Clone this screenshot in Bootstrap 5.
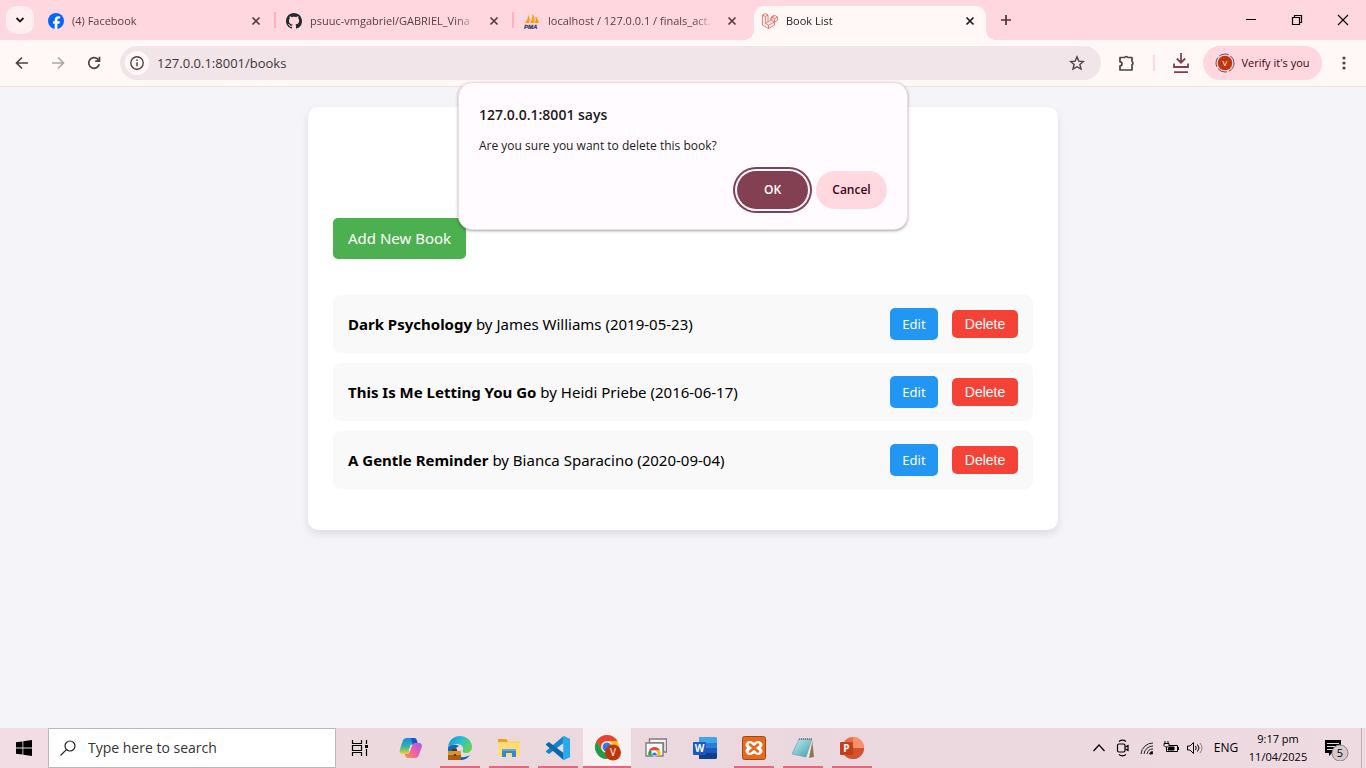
<!DOCTYPE html>
<html lang="en">
<head>
<meta charset="utf-8">
<meta name="viewport" content="width=device-width, initial-scale=1">
<title>Book List</title>
<link href="https://cdn.jsdelivr.net/npm/bootstrap@5.3.0/dist/css/bootstrap.min.css" rel="stylesheet">
<style>
  body { font-family: "Open Sans", "Noto Sans", sans-serif; font-size: 15px; line-height: 20px; color: #000; background: #f4f4f9; }
  svg { display: block; flex: none; }
  button { color: inherit; }
  .bare { border: 0; background: none; padding: 0; display: flex; align-items: center; justify-content: center; flex: none; }

  /* tab strip */
  .tabstrip { height: 40px; background: #ffd8df; font-size: 11px; color: #5b3a44; padding-left: 6px; }
  .tab-search { width: 28px; height: 28px; border-radius: 10px; background: #ffeff1; color: #201a1b; }
  .tabs-row { gap: 6px; padding: 6px 0 0 6px; min-width: 0; }
  .btab { flex: 0 1 232px; min-width: 0; height: 34px; padding: 0 8px 5px; gap: 8px; position: relative; }
  .btab a { color: inherit; text-decoration: none; flex: 1; min-width: 0; white-space: nowrap; overflow: hidden; -webkit-mask-image: linear-gradient(90deg, #000 calc(100% - 20px), transparent); mask-image: linear-gradient(90deg, #000 calc(100% - 20px), transparent); }
  .btab .bare { width: 16px; height: 16px; margin-left: 2px; }
  .btab.split::after { content: ""; position: absolute; right: -4px; top: 6px; width: 2px; height: 16px; background: #ffb1c4; }
  .btab.current { background: #fff8f7; border-radius: 10px 10px 0 0; color: #201a1b; }
  .btab.current::before, .btab.current::after { content: ""; position: absolute; bottom: 0; width: 10px; height: 10px; }
  .btab.current::before { left: -10px; background: radial-gradient(circle at 0 0, transparent 10px, #fff8f7 10px); }
  .btab.current::after { right: -10px; background: radial-gradient(circle at 100% 0, transparent 10px, #fff8f7 10px); }
  .win-btn { width: 46px; height: 40px; color: #000; }

  /* toolbar */
  .toolbar { height: 47px; background: #fff8f7; border-bottom: 1px solid #f3dde1; padding: 0 4px; color: #4f4145; }
  .tool-btn { width: 36px; height: 34px; }
  .omnibox { height: 34px; border-radius: 17px; background: #f1e5e9; margin: 0 8px; padding: 0 6px 0 5px; }
  .omnibox input { border: 0; background: none; outline: 0; padding: 0; font-size: 13px; color: #40363a; }
  .site-info { width: 24px; height: 24px; border-radius: 50%; background: #fff8f7; margin-right: 8px; }
  .verify { width: 119px; height: 34px; border-radius: 17px; background: #ffd8df; color: #3f0018; font-size: 11px; gap: 6px; }
  .tool-sep { width: 2px; height: 16px; background: #ffd8df; }

  /* confirm box, laid over the page */
  .confirm { position: absolute; z-index: 5; top: -5px; left: 50%; transform: translateX(-50%); width: 450px; max-width: 100%; padding: 22px 20px 20px; background: #fffbff; border: 1px solid #eddde3; border-radius: 14px; box-shadow: 0 1px 3px rgba(0,0,0,.35); color: #201a1b; }
  .confirm h2 { font-size: 14px; line-height: 20px; font-weight: 600; margin: 0 0 11px; }
  .confirm p { font-size: 12px; line-height: 20px; margin: 0 0 15px; }
  .pill { width: 71px; height: 38px; border: 0; border-radius: 19px; font-size: 12px; font-weight: 600; }
  .pill-ok { background: #844053; color: #fff; box-shadow: 0 0 0 2px #fffbff, 0 0 0 4px #844053; }
  .pill-cancel { background: #ffd9df; color: #3f0018; }

  /* book page */
  .book-panel { max-width: 750px; margin: 20px auto; padding: 111px 25px 41px; background: #fff; border-radius: 10px; box-shadow: 0 4px 8px rgba(0,0,0,.1); font-family: "Noto Sans", "Open Sans", sans-serif; }
  .add-btn { background: #4caf50; color: #fff; border-radius: 5px; padding: 10px 15px; line-height: 21px; text-decoration: none; }
  .book-list { gap: 10px; margin: 36px 0 0; }
  .book-row { min-height: 58px; padding: 12px 15px; background: #f9f9f9; border-radius: 8px; }
  .book-acts { gap: 14px; }
  .act { border: 0; color: #fff; border-radius: 5px; padding: 6px 0; text-align: center; text-decoration: none; }
  .act-edit { width: 48px; background: #2196f3; font-size: 13px; line-height: 20px; }
  .act-del { width: 66px; background: #f44336; font: 14px/16px "Liberation Sans", Arial, sans-serif; }

  /* taskbar */
  .taskbar { height: 40px; background: linear-gradient(90deg, #f3dde4, #ebd9de 30%, #ead8de 60%, #eedbe1); }
  .task-start { width: 48px; }
  .task-search { width: 288px; border: 1px solid #bdb5b8; background: #fff; padding-left: 11px; gap: 12px; min-width: 0; }
  .task-search input { border: 0; outline: 0; padding: 0; font-size: 14px; min-width: 0; flex: 1; }
  .task-search input::placeholder { color: #333; opacity: 1; }
  .task-apps { gap: 1px; padding-left: 3px; }
  .task-btn { width: 48px; height: 40px; position: relative; }
  .task-btn.running::after { content: ""; position: absolute; left: 4px; right: 4px; bottom: 0; height: 2px; background: #e9657d; }
  .task-btn.focused { background: #f8f1f3; }
  .task-btn.focused::after { left: 0; right: 0; }
  .tray { font-size: 12px; }
  .tray .bare { width: 24px; height: 40px; }
  .tray .lang { width: 38px; font-size: 12px; }
  .clock { width: 66px; font-size: 11px; line-height: 18px; text-align: center; white-space: nowrap; }
  .tray .notes { width: 50px; }
  .tray .peek { width: 5px; border-left: 1px solid #b9adb1; }
</style>
</head>
<body class="d-flex flex-column min-vh-100">
<svg width="0" height="0" class="position-absolute" aria-hidden="true">
  <symbol id="x" viewBox="0 0 16 16"><path d="M4.5 4.500 11.500 11.500M11.500 4.500 4.500 11.500" fill="none" stroke="currentColor" stroke-width="1.700"/></symbol>
</svg>

<header>
  <div class="tabstrip d-flex">
    <button class="bare tab-search mt-auto mb-auto" aria-label="Search tabs"><svg width="12" height="12" viewBox="0 0 12 12"><path d="M2.500 4 6 7.500 9.500 4" fill="none" stroke="currentColor" stroke-width="1.800"/></svg></button>
    <nav class="tabs-row d-flex flex-grow-1" aria-label="Tabs">
      <div class="btab split d-flex align-items-center">
        <svg width="16" height="16" viewBox="0 0 16 16"><circle cx="8" cy="8" r="8" fill="#0866ff"/><path d="M6.700 16v-5.300H5V8.300h1.700V7.200c0-2.800 1.300-4 3.900-4 .5 0 1.100.1 1.500.2v2.200l-1-.1c-1.300 0-1.700.5-1.700 1.700v1.100h2.600l-.5 2.400H9.400V16z" fill="#fff"/></svg>
        <a href="#">(4) Facebook</a>
        <button class="bare" aria-label="Close tab"><svg width="16" height="16"><use href="#x"/></svg></button>
      </div>
      <div class="btab split d-flex align-items-center">
        <svg width="16" height="16" viewBox="0 0 16 16"><path fill="#24292f" d="M8 0C3.580 0 0 3.580 0 8c0 3.540 2.290 6.530 5.470 7.590.4.070.55-.17.55-.38 0-.19-.01-.82-.01-1.490-2.010.37-2.530-.49-2.690-.94-.09-.23-.48-.94-.82-1.130-.28-.15-.68-.52-.01-.53.63-.01 1.080.58 1.230.82.72 1.210 1.870.87 2.330.66.07-.52.28-.87.51-1.070-1.780-.2-3.640-.89-3.640-3.950 0-.87.31-1.590.82-2.150-.08-.2-.36-1.020.08-2.120 0 0 .67-.21 2.200.82.64-.18 1.320-.27 2-.27s1.360.09 2 .27c1.530-1.040 2.200-.82 2.200-.82.44 1.100.16 1.920.08 2.120.51.56.82 1.270.82 2.150 0 3.070-1.870 3.750-3.650 3.950.29.25.54.73.54 1.480 0 1.070-.01 1.930-.01 2.200 0 .21.15.46.55.38A8.010 8.010 0 0 0 16 8c0-4.420-3.580-8-8-8"/></svg>
        <a href="#">psuuc-vmgabriel/GABRIEL_Vina</a>
        <button class="bare" aria-label="Close tab"><svg width="16" height="16"><use href="#x"/></svg></button>
      </div>
      <div class="btab d-flex align-items-center">
        <svg width="16" height="16" viewBox="0 0 16 16"><path d="M1 10C3 8 4 5 4 2c2 2 2 6 1 8zM6 10c2-3 3-6 2-9 3 2 3 6 2 9zM10.500 10c1-2 1.500-4 1-7 2 2 3 5 3.500 7z" fill="#f89c0e"/><text x="0" y="15.500" font-family="Liberation Sans, sans-serif" font-size="6" font-weight="700" font-style="italic" fill="#3d3d6b" stroke="#3d3d6b" stroke-width=".3">PMA</text></svg>
        <a href="#">localhost / 127.0.0.1 / finals_act.</a>
        <button class="bare" aria-label="Close tab"><svg width="16" height="16"><use href="#x"/></svg></button>
      </div>
      <div class="btab current d-flex align-items-center">
        <svg width="16" height="16" viewBox="0 0 16 16"><path d="M.5 2 3.300.600 6 2v7l2.700-1.500V5.200L11.500 3.600l0-1.500M.5 2v10l6 3.500 6-3.500V9l3-1.700V4l-3-1.700-2.800 1.500v3.700l2.800 1.500M.5 2l2.800 1.500V10.300L6.500 12.200 12.500 9M3.300 3.500 6 2M3.300 10.300 6 9M6.500 12.200V15.500M9.700 4l2.800 1.700V9M12.500 5.700l3-1.700" fill="none" stroke="#ef5a50" stroke-width=".8" stroke-linejoin="round"/></svg>
        <a href="#">Book List</a>
        <button class="bare" aria-label="Close tab"><svg width="16" height="16"><use href="#x"/></svg></button>
      </div>
      <button class="bare ms-1 mb-auto" aria-label="New tab"><svg width="20" height="28" viewBox="0 0 20 28"><path d="M10 9v10M5 14h10" fill="none" stroke="#4f3039" stroke-width="1.700"/></svg></button>
    </nav>
    <button class="bare win-btn" aria-label="Minimize"><svg width="12" height="12" viewBox="0 0 12 12"><path d="M1 5.500h10" stroke="currentColor"/></svg></button>
    <button class="bare win-btn" aria-label="Restore"><svg width="12" height="12" viewBox="0 0 12 12" fill="none" stroke="currentColor" stroke-width="1.200"><path d="M1.500 3.500h7v7h-7zM3.500 3.500v-2h7v7h-2"/></svg></button>
    <button class="bare win-btn" aria-label="Close"><svg width="12" height="12" viewBox="0 0 12 12"><path d="m1 1 10 10M11 1 1 11" stroke="currentColor" stroke-width="1.100"/></svg></button>
  </div>

  <div class="toolbar d-flex align-items-center">
    <button class="bare tool-btn" aria-label="Back"><svg width="16" height="16" viewBox="0 0 16 16" fill="none" stroke="currentColor" stroke-width="1.700"><path d="M14 8H3M8 2.500 2.500 8 8 13.500"/></svg></button>
    <button class="bare tool-btn" aria-label="Forward" disabled><svg width="16" height="16" viewBox="0 0 16 16" fill="none" stroke="#aea5a7" stroke-width="1.700"><path d="M2 8h11M8 2.500 13.500 8 8 13.500"/></svg></button>
    <button class="bare tool-btn" aria-label="Reload"><svg width="16" height="16" viewBox="0 0 16 16" fill="none" stroke="currentColor" stroke-width="1.700"><path d="M13.200 9.200A5.300 5.300 0 1 1 11.800 4.200L13.400 6"/><path d="M13.500 1.800V6.200H9.200"/></svg></button>
    <form class="omnibox d-flex align-items-center flex-grow-1" onsubmit="return false">
      <button type="button" class="bare site-info" aria-label="Site information"><svg width="16" height="16" viewBox="0 0 16 16"><circle cx="8" cy="8" r="6.200" fill="none" stroke="currentColor" stroke-width="1.400"/><path d="M8 7.200v4M8 4.500v1.500" stroke="currentColor" stroke-width="1.500"/></svg></button>
      <input class="flex-grow-1" type="text" aria-label="Address" value="127.0.0.1:8001/books">
      <button type="button" class="bare tool-btn" aria-label="Bookmark"><svg width="16" height="16" viewBox="0 0 16 16"><path d="m8 1.800 1.800 4.300 4.600.4-3.500 3 1.100 4.600L8 11.700l-4 2.400 1.100-4.600-3.500-3 4.600-.4z" fill="none" stroke="currentColor" stroke-width="1.400"/></svg></button>
    </form>
    <button class="bare tool-btn" aria-label="Extensions"><svg width="18" height="18" viewBox="0 0 18 18"><path d="M2 3.500h4.600a1.800 1.500 0 0 1 3.400 0h4V7.500a1.500 1.800 0 0 1 0 3.300V16H2v-4.200a2 2 0 0 0 0-4z" fill="none" stroke="currentColor" stroke-width="1.700" stroke-linejoin="round"/></svg></button>
    <span class="tool-sep mx-2"></span>
    <button class="bare tool-btn" aria-label="Downloads"><svg width="18" height="22" viewBox="0 0 18 22" fill="none" stroke="#844053" stroke-width="1.800"><path d="M9 1v9.500M4.800 6.500 9 10.700l4.200-4.200M2 11.500V15h14v-3.500M2 20.100h14"/></svg></button>
    <button class="bare verify ms-1"><svg width="20" height="20" viewBox="0 0 20 20"><circle cx="10" cy="10" r="9" fill="none" stroke="#844053" stroke-dasharray="10 2"/><circle cx="10" cy="10" r="7.300" fill="#bf360c"/><text x="10" y="13" text-anchor="middle" font-size="8" fill="#fff">V</text></svg>Verify it's you</button>
    <button class="bare tool-btn ms-1" aria-label="Menu"><svg width="4" height="16" viewBox="0 0 4 16" fill="currentColor"><circle cx="2" cy="3" r="1.600"/><circle cx="2" cy="8" r="1.600"/><circle cx="2" cy="13" r="1.600"/></svg></button>
  </div>
</header>

<main class="position-relative flex-grow-1">
  <section class="confirm" role="alertdialog" aria-labelledby="confirm-title">
    <h2 id="confirm-title">127.0.0.1:8001 says</h2>
    <p>Are you sure you want to delete this book?</p>
    <div class="d-flex justify-content-end gap-2">
      <button class="pill pill-ok">OK</button>
      <button class="pill pill-cancel">Cancel</button>
    </div>
  </section>

  <div class="book-panel">
    <a class="add-btn d-inline-block" href="#">Add New Book</a>
    <ul class="book-list list-unstyled d-flex flex-column">
      <li class="book-row d-flex align-items-center justify-content-between">
        <span><strong>Dark Psychology</strong> by James Williams (2019-05-23)</span>
        <span class="book-acts d-flex align-items-center"><a class="act act-edit" href="#">Edit</a><button class="act act-del">Delete</button></span>
      </li>
      <li class="book-row d-flex align-items-center justify-content-between">
        <span><strong>This Is Me Letting You Go</strong> by Heidi Priebe (2016-06-17)</span>
        <span class="book-acts d-flex align-items-center"><a class="act act-edit" href="#">Edit</a><button class="act act-del">Delete</button></span>
      </li>
      <li class="book-row d-flex align-items-center justify-content-between">
        <span><strong>A Gentle Reminder</strong> by Bianca Sparacino (2020-09-04)</span>
        <span class="book-acts d-flex align-items-center"><a class="act act-edit" href="#">Edit</a><button class="act act-del">Delete</button></span>
      </li>
    </ul>
  </div>
</main>

<footer class="taskbar d-flex">
  <button class="bare task-start" aria-label="Start"><svg width="16" height="16" viewBox="0 0 16 16"><path d="M0 2.300 6.500 1.400v6.200H0zM7.300 1.300 16 0v7.600H7.300zM0 8.400h6.500v6.200L0 13.700zM7.300 8.400H16V16l-8.700-1.300z"/></svg></button>
  <label class="task-search d-flex align-items-center">
    <svg width="16" height="16" viewBox="0 0 16 16" fill="none" stroke="#222" stroke-width="1.200"><circle cx="10" cy="6" r="5"/><path d="M6.400 9.600.500 15.500"/></svg>
    <input type="text" placeholder="Type here to search" aria-label="Type here to search">
  </label>
  <button class="bare task-btn" aria-label="Task view"><svg width="18" height="16" viewBox="0 0 18 16" fill="none" stroke="#000" stroke-width="1.200"><path d="M1.500 0v3.500h9V0M1.500 5.500h9v5h-9zM1.500 16v-3.500h9V16M15.500 0v4M15.500 9v7"/><path d="M14 5h3v3h-3z" fill="#000" stroke="none"/></svg></button>
  <div class="task-apps d-flex flex-grow-1">
    <button class="bare task-btn" aria-label="Copilot"><svg width="24" height="22" viewBox="0 0 24 22">
      <defs><linearGradient id="cp1" x1="0" y1="0" x2="0" y2="1"><stop stop-color="#1689e6"/><stop offset=".55" stop-color="#34b9a0"/><stop offset="1" stop-color="#f3cf2d"/></linearGradient><linearGradient id="cp2" x1="1" y1="0" x2="0" y2="1"><stop stop-color="#a45cf0"/><stop offset=".5" stop-color="#ee5fa5"/><stop offset="1" stop-color="#fb9440"/></linearGradient></defs>
      <path d="M8 1h7c2 0 2.500 1.500 3 3l.5 2h-3c-2 0-3 1-3.500 3l-1.500 5c-.6 1.800-1.500 3-3.500 3H4c-3 0-4-2-3-5L3.500 4.500C4.200 2.300 5.500 1 8 1z" fill="url(#cp1)"/><path d="M16 21H9c-2 0-2.500-1.500-3-3l-.3-1H7.500c2 0 3-1.200 3.500-3l2-5.500C13.600 6.700 14.500 6 16.500 6h3c3 0 4 2 3 5L20 17.500C19.300 19.700 18.500 21 16 21z" fill="url(#cp2)"/><path d="M12 1h3c2 0 2.500 1.500 3 3l.6 2H17c-1.700 0-2.600.5-3.200 2z" fill="#1555cf"/><path d="m13 8-2 6h-1.500l2-6z" fill="#ead8de"/></svg></button>
    <button class="bare task-btn running" aria-label="Edge"><svg width="24" height="24" viewBox="0 0 24 24">
      <defs><linearGradient id="ed" x1="0" y1="0" x2="1" y2=".5"><stop stop-color="#2089dc"/><stop offset=".5" stop-color="#25bdd4"/><stop offset="1" stop-color="#61d25d"/></linearGradient></defs>
      <path d="M0 13C0 5 5 0 12 0s12 5 12 11c0 4-3 6-6 6-3 0-4-1-3-3 1-4-3-6-6-6-4 0-7 2-9 5z" fill="url(#ed)"/><path d="M0 12c3-4 8-4 11-2-3 1-4 4-2 8s8 4 13 1c-2 3-5 5-10 5C5 24-1 18 0 12z" fill="#1266b4"/><path d="M0 15h13v9H0z" fill="#a95e15"/><path d="M0 15h13v4H0z" fill="#df922e"/><path d="M4 15v-2h5v2M6 18h2v2H6z" fill="#5b310d"/></svg></button>
    <button class="bare task-btn running" aria-label="File Explorer"><svg width="22" height="20" viewBox="0 0 22 20"><path d="M0 1h8l2 2h12v15H0z" fill="#ffd65e"/><path d="M0 1h8l2 2-1 1H0z" fill="#dda52c"/><path d="M22 5H0v13h22z" fill="#ffdc75"/><path d="M4 19v-8h14v8h-4v-4H8v4z" fill="#3689c9"/><path d="M4 11h14v2H4z" fill="#59abe2"/></svg></button>
    <button class="bare task-btn running" aria-label="Visual Studio Code"><svg width="24" height="24" viewBox="0 0 24 24"><path d="M17.500 0 24 3v18l-6.500 3z" fill="#29a8ec"/><path d="M17.500 0v7L3 18 0 16V15z" fill="#1684ca"/><path d="M17.500 24v-7L3 6 0 8v1z" fill="#0868ad"/><path d="M17.500 0 24 3v18l-6.500 3z" fill="#29a8ec"/></svg></button>
    <button class="bare task-btn running focused" aria-label="Chrome"><svg width="28" height="26" viewBox="0 0 28 26"><circle cx="14" cy="12" r="12" fill="#fbc116"/><path d="M3.600 6A12 12 0 0 1 24.400 6H14a6 6 0 0 0-5.200 9z" fill="#ea4335"/><path d="M3.600 6 8.800 15a6 6 0 0 0 7.800 2.400L14 24A12 12 0 0 1 3.600 6z" fill="#229b50"/><circle cx="14" cy="12" r="5.700" fill="#fff"/><circle cx="14" cy="12" r="4.500" fill="#3478e8"/><circle cx="20" cy="17.500" r="8" fill="#bf360c"/><text x="20" y="21" text-anchor="middle" font-size="10" fill="#fff">V</text></svg></button>
    <button class="bare task-btn" aria-label="Chrome Remote Desktop"><svg width="22" height="20" viewBox="0 0 22 20"><path d="M4.500 1h17v13h-3V5h-14z" fill="#f4f1f2" stroke="#817d7f" stroke-width="1.400"/><path d="M1 5h17v13H1z" fill="#fff" stroke="#817d7f" stroke-width="1.400"/><path d="M3.500 17.500a6 6 0 0 1 1.600-6l4.400 6z" fill="#299b50"/><path d="M4 12.500a6 6 0 0 1 11 0z" fill="#ea4335"/><path d="M10 12.500h5a6 6 0 0 1 .5 5H10z" fill="#fbc116"/><circle cx="9.500" cy="15.500" r="3" fill="#fff"/><path d="M7.200 17.500a2.400 2.400 0 1 1 4.600 0z" fill="#3478e8"/></svg></button>
    <button class="bare task-btn" aria-label="Word"><svg width="24" height="22" viewBox="0 0 24 22"><path d="M6 0h17l1 1v5H6z" fill="#41a5ee"/><path d="M6 6h18v5H6z" fill="#2b7cd3"/><path d="M6 11h18v5H6z" fill="#185abd"/><path d="M6 16h18v5l-1 1H6z" fill="#103f91"/><rect y="5" width="13" height="13" rx="1" fill="#185abd"/><text x="6.500" y="15" text-anchor="middle" font-size="10" font-weight="700" fill="#fff">W</text></svg></button>
    <button class="bare task-btn running" aria-label="XAMPP"><svg width="24" height="24" viewBox="0 0 24 24"><rect x=".5" y=".5" width="23" height="23" rx="2" fill="#e9681b" stroke="#9d4a16"/><path d="M8 6c2 0 2.500 1.500 4 1.500S14 6 16 6s3.500 1.500 3.500 3-1.500 1.500-1.500 3 1.500 1.500 1.500 3-1.500 3-3.500 3-2.500-1.500-4-1.500S10 18 8 18s-3.500-1.500-3.500-3S6 13.500 6 12s-1.500-1.500-1.500-3S6 6 8 6z" fill="#fff" stroke="#fff" stroke-width="2"/><path d="m8 8.500 8 7M16 8.500l-8 7" stroke="#e9681b" stroke-width="2.600" stroke-linecap="round"/></svg></button>
    <button class="bare task-btn running" aria-label="Notepad"><svg width="24" height="22" viewBox="0 0 24 22"><defs><linearGradient id="np" x1="0" y1="0" x2="1" y2="1"><stop stop-color="#c5eef3"/><stop offset="1" stop-color="#3e9dac"/></linearGradient></defs><path d="m21 2 2 18-6 1z" fill="#8e7550"/><path d="M8 2 22 1l-4 20-3-1z" fill="#eee9d9"/><path d="M8 2h13l-6 18L1 17z" fill="url(#np)" stroke="#6b9ba4" stroke-width=".6"/><path d="M8 2h13" stroke="#647276" stroke-width="1.500" stroke-dasharray="1 1"/></svg></button>
    <button class="bare task-btn running" aria-label="PowerPoint"><svg width="24" height="22" viewBox="0 0 24 22"><circle cx="13" cy="11" r="11" fill="#ed6c47"/><path d="M13 0a11 11 0 0 1 11 11H13z" fill="#ff8f6b"/><path d="M2 11h22a11 11 0 0 1-22 0z" fill="#d35230"/><rect y="5" width="13" height="13" rx="1" fill="#c43e1c"/><text x="6.500" y="15" text-anchor="middle" font-size="10" font-weight="700" fill="#fff">P</text></svg></button>
  </div>
  <div class="tray d-flex align-items-center">
    <button class="bare" aria-label="Show hidden icons"><svg width="12" height="12" viewBox="0 0 12 12"><path d="m.5 9 5.500-6 5.500 6" fill="none" stroke="#000" stroke-width="1.200"/></svg></button>
    <button class="bare" aria-label="Meet now"><svg width="14" height="18" viewBox="0 0 14 18" fill="none" stroke="#000" stroke-width="1.200"><rect x="1.500" y="5" width="7.500" height="8" rx="1.500"/><path d="m9.500 8 2.500-1.500v5L9.500 10M3 2.500c2-1.500 5-1.500 7 0M3 15.500c2 1.500 5 1.500 7 0"/></svg></button>
    <button class="bare" aria-label="Network"><svg width="14" height="14" viewBox="0 0 14 14" fill="none" stroke="#222"><path d="M1 13A12 12 0 0 1 13 2M4 13a9 9 0 0 1 9-8M7 13a6 6 0 0 1 6-5"/><path d="M9.500 13a3 3 0 0 1 3-2.500V13z" fill="#000"/></svg></button>
    <button class="bare" aria-label="Battery"><svg width="16" height="14" viewBox="0 0 16 14" fill="none" stroke="#000"><path d="M6 4.500h8.500v6h-11V8M15.500 6v3M2 0v2.500M5 0v2.500M1 2.500h5v2L4.500 6h-2L1 4.500zM3.500 6v3"/><path d="M6 6h5v3H5z" fill="#000"/></svg></button>
    <button class="bare" aria-label="Volume"><svg width="16" height="14" viewBox="0 0 16 14" fill="none" stroke="#000"><path d="M.5 5H3l3.500-3.500v11L3 9H.5zM8.500 5q1.500 2 0 4M10.500 3.500q3 3.500 0 7"/><path d="M13 2q4 5 0 10" stroke="#8b7d81"/></svg></button>
    <button class="bare lang">ENG</button>
    <div class="clock">9:17 pm<br>11/04/2025</div>
    <button class="bare notes" aria-label="5 notifications"><svg width="26" height="26" viewBox="0 0 26 26"><path d="M2 5h16v13H9l-3 3v-3H2z"/><path d="M4 8.500h12M4 11.500h12M4 14.500h8" stroke="#ead8de"/><circle cx="17" cy="18" r="8" fill="#d5c9cd" stroke="#8e8588"/><text x="17" y="22" text-anchor="middle" font-size="11">5</text></svg></button>
    <button class="bare peek" aria-label="Show desktop"></button>
  </div>
</footer>
<script src="https://cdn.jsdelivr.net/npm/bootstrap@5.3.0/dist/js/bootstrap.bundle.min.js"></script>
</body>
</html>
